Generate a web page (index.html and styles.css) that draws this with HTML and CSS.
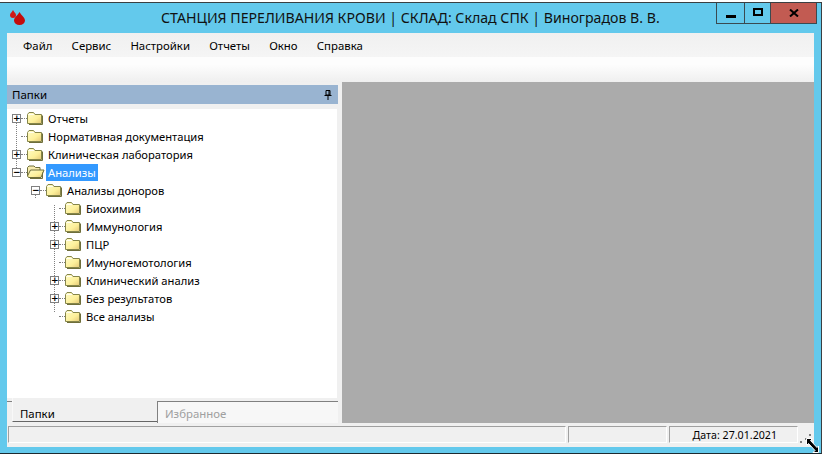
FILE: index.html
```html
<!DOCTYPE html>
<html lang="ru">
<head>
<meta charset="utf-8">
<title>Склад</title>
<link rel="stylesheet" href="styles.css">
</head>
<body>
<svg class="defs" width="0" height="0">
  <defs>
    <linearGradient id="fg" x1="0" y1="0" x2="1" y2="1">
      <stop offset="0" stop-color="#fffcc8"/>
      <stop offset="0.6" stop-color="#fdf09a"/>
      <stop offset="1" stop-color="#e4c878"/>
    </linearGradient>
    <symbol id="folder" viewBox="0 0 16 14">
      <path d="M0.500 12.500V3.500L2 1.500H6.500L8 3.500H14.500V12.500Z" fill="url(#fg)" stroke="#85854a"/>
      <path d="M15.500 4.500V13.500H2" fill="none" stroke="#6e6e3a"/>
      <path d="M1.500 3.500H7" fill="none" stroke="#fffdf0"/>
    </symbol>
    <symbol id="folder-open" viewBox="0 0 18 14">
      <path d="M0.500 11V2.500L2 1H7L8.500 2.500H13V5" fill="#f8ecae" stroke="#6e6e3a"/>
      <path d="M0.500 11L3.500 5H17L14 12.500H1.500Z" fill="url(#fg)" stroke="#6e6e3a"/>
      <path d="M15.500 7.500V13.500H3" fill="none" stroke="#6e6e3a"/>
    </symbol>
  </defs>
</svg>
<div class="window">
  <header class="titlebar">
    <svg class="app-icon" width="18" height="18" viewBox="0 0 18 18">
      <path d="M5 1C6 3 8 4.500 8 6A3 3 0 0 1 2 6C2 4.500 4 3 5 1Z" fill="#d01818"/>
      <path d="M11.500 3C13 6 17 8.500 17 11.500A5.500 4.500 0 0 1 6 11.500C6 8.500 10 6 11.500 3Z" fill="#c40c0c"/>
    </svg>
    <div class="title">СТАНЦИЯ ПЕРЕЛИВАНИЯ КРОВИ | СКЛАД: Склад СПК | Виноградов В. В.</div>
    <div class="controls">
      <div class="ctl ctl-min"><svg width="10" height="3" viewBox="0 0 10 3"><rect width="10" height="3" fill="#000"/></svg></div>
      <div class="ctl ctl-max"><svg width="10" height="8" viewBox="0 0 10 8"><path d="M1 1H9V7H1Z" fill="none" stroke="#000" stroke-width="2"/></svg></div>
      <div class="ctl ctl-close"><svg width="10" height="8" viewBox="0 0 10 8"><path d="M1 0.500L9 7.500M9 0.500L1 7.500" fill="none" stroke="#000" stroke-width="2"/></svg></div>
    </div>
  </header>
  <div class="client">
    <nav class="menubar">
      <span class="menu-item">Файл</span>
      <span class="menu-item">Сервис</span>
      <span class="menu-item">Настройки</span>
      <span class="menu-item">Отчеты</span>
      <span class="menu-item">Окно</span>
      <span class="menu-item">Справка</span>
    </nav>
    <div class="toolbar"></div>
    <div class="workspace">
      <aside class="sidebar">
        <div class="panel-head">
          <span>Папки</span>
          <svg width="8" height="10" viewBox="0 0 8 10"><path d="M2 0.500H6V5H2ZM5 1V5M0.500 5.500H7.500M4 6V10" fill="none" stroke="#000"/></svg>
        </div>
        <div class="tree">
          <svg class="tree-lines" width="80" height="216" viewBox="0 0 80 216">
            <path d="M9.500 6V66M28.500 78V90M47.500 96V204" fill="none" stroke="#808080" stroke-dasharray="1 1"/>
          </svg>
          <div class="row l0"><span class="box">+</span><span class="dots"></span><svg class="fd"><use href="#folder"/></svg><span class="label">Отчеты</span></div>
          <div class="row l0"><span class="nobox"></span><span class="dots"></span><svg class="fd"><use href="#folder"/></svg><span class="label">Нормативная документация</span></div>
          <div class="row l0"><span class="box">+</span><span class="dots"></span><svg class="fd"><use href="#folder"/></svg><span class="label">Клиническая лаборатория</span></div>
          <div class="row l0"><span class="box">−</span><span class="dots"></span><svg class="fd fd-open"><use href="#folder-open"/></svg><span class="label selected">Анализы</span></div>
          <div class="row l1"><span class="box">−</span><span class="dots"></span><svg class="fd"><use href="#folder"/></svg><span class="label">Анализы доноров</span></div>
          <div class="row l2"><span class="nobox"></span><span class="dots"></span><svg class="fd"><use href="#folder"/></svg><span class="label">Биохимия</span></div>
          <div class="row l2"><span class="box">+</span><span class="dots"></span><svg class="fd"><use href="#folder"/></svg><span class="label">Иммунология</span></div>
          <div class="row l2"><span class="box">+</span><span class="dots"></span><svg class="fd"><use href="#folder"/></svg><span class="label">ПЦР</span></div>
          <div class="row l2"><span class="nobox"></span><span class="dots"></span><svg class="fd"><use href="#folder"/></svg><span class="label">Имуногемотология</span></div>
          <div class="row l2"><span class="box">+</span><span class="dots"></span><svg class="fd"><use href="#folder"/></svg><span class="label">Клинический анализ</span></div>
          <div class="row l2"><span class="box">+</span><span class="dots"></span><svg class="fd"><use href="#folder"/></svg><span class="label">Без результатов</span></div>
          <div class="row l2"><span class="nobox"></span><span class="dots"></span><svg class="fd"><use href="#folder"/></svg><span class="label">Все анализы</span></div>
        </div>
        <div class="tabs">
          <div class="tab tab-active">Папки</div>
          <div class="tab tab-idle">Избранное</div>
        </div>
      </aside>
      <main class="canvas"></main>
    </div>
    <footer class="statusbar">
      <div class="cell cell-a"></div>
      <div class="cell cell-b"></div>
      <div class="cell cell-c">Дата: 27.01.2021</div>
      <svg class="grip" width="14" height="18" viewBox="0 0 14 18">
        <path d="M9 8h2v2H9zM9 12h2v2H9zM5 12h2v2H5zM0 15h2v2H0z" fill="#808080"/>
      </svg>
    </footer>
  </div>
  <svg class="cursor" width="14" height="15" viewBox="0 0 14 15">
    <path d="M0.500 0.500H6.500L4.500 2.500L11 9.500L12.500 8V14.500H7L9 12.500L2.500 5.500L0.500 7.500Z" fill="#000" stroke="#fff" stroke-width="1"/>
  </svg>
</div>
</body>
</html>
```
FILE: styles.css
```css
* { box-sizing: border-box; }
html, body { margin: 0; padding: 0; }
body {
  width: 823px;
  height: 456px;
  background: #fff;
  overflow: hidden;
  font-family: "Noto Sans", "Open Sans", sans-serif;
  font-size: 11.2px;
  color: #000;
}
.defs { position: absolute; }
.window {
  position: relative;
  width: 822px;
  height: 452px;
  margin-top: 2px;
  background: #63c9ec;
  border-top: 1px solid #3a3f42;
  border-bottom: 1px solid #1c2a30;
  border-right: 1px solid #3a3f42;
  display: flex;
  flex-direction: column;
}
.titlebar {
  height: 30px;
  display: flex;
  flex: none;
  position: relative;
  padding-left: 8px;
}
.app-icon { margin-top: 6px; flex: none; }
.title {
  position: absolute;
  left: 161px;
  top: 5px;
  font-size: 14.15px;
  line-height: 20px;
  white-space: nowrap;
  color: #111;
}
.controls {
  margin-left: auto;
  margin-right: 4px;
  display: flex;
  height: 21px;
}
.ctl {
  border: 1px solid #3a4a50;
  border-top: 0;
  margin-left: -1px;
  display: flex;
  align-items: center;
  justify-content: center;
}
.ctl-min { width: 29px; }
.ctl-min svg { margin-top: 6px; }
.ctl-max { width: 27px; }
.ctl-max svg { margin-top: -3px; }
.ctl-close { width: 47px; background: #c25b52; }
.client {
  margin: 0 7px 0 7px;
  height: 414px;
  flex: none;
  display: flex;
  flex-direction: column;
  background: #f0f0f0;
}
.menubar {
  height: 24px;
  flex: none;
  display: flex;
  align-items: center;
  padding-left: 16px;
  gap: 19.2px;
  background: linear-gradient(#f0f0f0, #f5f5f5);
  font-size: 11.4px;
}
.toolbar {
  height: 25px;
  flex: none;
  background: linear-gradient(#fdfdfd 30%, #efefef);
}
.workspace {
  flex: 1;
  display: flex;
  min-height: 0;
}
.sidebar {
  width: 331px;
  margin-right: 4px;
  flex: none;
  display: flex;
  flex-direction: column;
  padding-top: 3px;
}
.panel-head {
  height: 19px;
  flex: none;
  background: #99b4d1;
  display: flex;
  align-items: center;
  justify-content: space-between;
  padding: 0 6px 0 5px;
  font-size: 11.5px;
}
.tree {
  position: relative;
  flex: 1;
  margin-top: 5px;
  background: #fff;
  width: 330px;
}
.tree-lines { position: absolute; left: 0; top: 0; }
.row {
  position: relative;
  height: 18px;
  display: flex;
  align-items: center;
  white-space: nowrap;
}
.l0 { padding-left: 5px; }
.l1 { padding-left: 24px; }
.l2 { padding-left: 43px; }
.box {
  width: 9px;
  height: 9px;
  flex: none;
  border: 1px solid #808080;
  background: #fff;
  font-family: "DejaVu Sans", sans-serif;
  font-size: 9px;
  font-weight: 700;
  line-height: 7px;
  text-align: center;
  overflow: hidden;
}
.nobox { width: 9px; flex: none; }
.dots {
  width: 6px;
  flex: none;
  border-top: 1px dotted #808080;
}
.fd { width: 16px; height: 14px; flex: none; }
.fd-open { width: 18px; margin-right: -2px; }
.label {
  margin-left: 3px;
  padding: 0 2px;
  line-height: 17px;
}
.selected { background: #3399ff; color: #fff; }
.tabs {
  height: 25px;
  flex: none;
  display: flex;
  background: #f0f0f0;
  font-size: 11.4px;
}
.tabs::before {
  content: "";
  width: 5px;
  height: 1px;
  flex: none;
  margin-top: 3px;
  background: #808080;
}
.tab { overflow: hidden; }
.tab-active {
  width: 145px;
  height: 24px;
  padding-left: 7px;
  line-height: 32px;
  border-bottom: 1px solid #666;
  border-left: 1px solid #f8f8f8;
}
.tab-idle {
  flex: 1;
  height: 22px;
  padding-left: 7px;
  color: #a0a0a0;
  background: #f7f7f7;
  border-top: 1px solid #808080;
  border-left: 1px solid #808080;
  margin-top: 3px;
  line-height: 24px;
}
.canvas { flex: 1; background: #ababab; }
.statusbar {
  height: 24px;
  flex: none;
  display: flex;
  position: relative;
  padding: 3px 0 4px 1px;
  gap: 2px;
  background: #f0f0f0;
}
.cell {
  height: 100%;
  border-top: 1px solid #a0a0a0;
  border-left: 1px solid #a0a0a0;
  border-right: 1px solid #fff;
  border-bottom: 1px solid #fff;
}
.cell-a { width: 559px; }
.cell-b { width: 99px; }
.cell-c { width: 129px; text-align: right; padding-right: 20px; line-height: 17px; font-size: 10.65px; }
.grip { flex: none; overflow: visible; }
.cursor { position: absolute; right: 1px; bottom: 0; }
```
